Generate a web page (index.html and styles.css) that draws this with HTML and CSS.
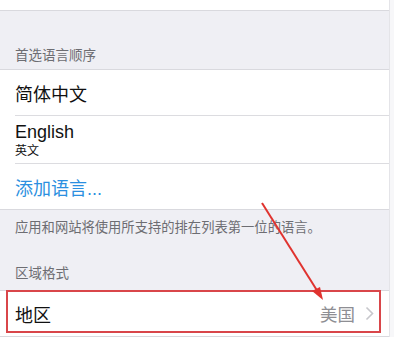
FILE: index.html
```html
<!DOCTYPE html>
<html lang="zh-CN">
<head>
    <meta charset="UTF-8">
    <title>语言与地区</title>
    <link rel="stylesheet" href="styles.css">
</head>
<body>
<div class="screen">
    <div class="group top-group"></div>

    <div class="section-header spaced">首选语言顺序</div>
    <div class="group">
        <div class="cell">
            <span class="cell-title">简体中文</span>
        </div>
        <div class="cell two-line">
            <span class="cell-title">English</span>
            <span class="cell-sub">英文</span>
        </div>
        <div class="cell last">
            <span class="cell-link">添加语言...</span>
        </div>
    </div>
    <div class="section-footer">应用和网站将使用所支持的排在列表第一位的语言。</div>

    <div class="section-header">区域格式</div>
    <div class="group">
        <div class="cell last">
            <span class="cell-title">地区</span>
            <span class="cell-value">美国</span>
            <svg class="chevron" width="9" height="15" viewBox="0 0 9 15">
                <path d="M1.5 1.5 L7.5 7.5 L1.5 13.5" fill="none" stroke="#c7c7cc" stroke-width="1.6"/>
            </svg>
        </div>
    </div>

    <!-- annotation overlay -->
    <div class="mark-box"></div>
    <svg class="mark-arrow" width="394" height="337" viewBox="0 0 394 337">
        <line x1="262" y1="203" x2="318" y2="292" stroke="#e0332f" stroke-width="2"/>
        <polygon points="323,300 312,291 320,287" fill="#e0332f"/>
    </svg>
</div>
</body>
</html>
```

FILE: styles.css
```css
body {
    margin: 0;
    background-color: #f7f7f9;
    font-family: "Liberation Sans", "Noto Sans CJK SC", sans-serif;
}
.screen {
    position: relative;
    width: 389px;
    height: 337px;
    overflow: hidden;
    background-color: #efeff4; /* iOS grouped gray */
    border-right: 1px solid #e4e4e8;
}
.group {
    background-color: #ffffff;
    border-top: 1px solid #d9d9de;
    border-bottom: 1px solid #d9d9de;
}
.top-group {
    height: 10px;
    border-top: none;
}
.section-header {
    height: 36px;
    padding: 0 15px;
    display: flex;
    align-items: center;
    font-size: 13.5px;
    color: #6d6d72;
}
.section-header.spaced {
    margin-top: 18px;
    height: 40px;
    align-items: flex-start;
    padding-top: 15px;
    box-sizing: border-box;
}
.section-footer {
    padding: 7px 15px 0;
    height: 37px;
    font-size: 13.3px;
    color: #6d6d72;
}
.cell {
    display: flex;
    align-items: center;
    height: 45px;
    margin-left: 15px;
    padding-right: 15px;
    border-bottom: 1px solid #dcdce0;
}
.cell.last {
    border-bottom: none;
}
.cell.two-line {
    flex-direction: column;
    align-items: flex-start;
    justify-content: center;
    height: 47px;
}
.cell-title {
    font-size: 18px;
    color: #111111;
    flex: 1;
}
.two-line .cell-title {
    flex: none;
    line-height: 22px;
}
.cell-sub {
    font-size: 12px;
    color: #111111;
    line-height: 16px;
}
.cell-link {
    font-size: 18px;
    color: #2b8fe0;
}
.cell-value {
    font-size: 17.5px;
    color: #8e8e93;
    margin-right: 10px;
}
.chevron {
    display: block;
}
.mark-box {
    position: absolute;
    left: 6px;
    top: 290px;
    width: 371px;
    height: 39px;
    border: 2px solid #d9464a;
}
.mark-arrow {
    position: absolute;
    left: 0;
    top: 0;
}
```
